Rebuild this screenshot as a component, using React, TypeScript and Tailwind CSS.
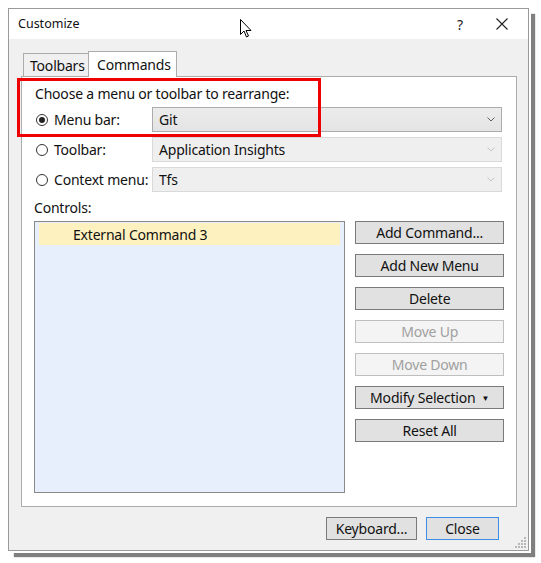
import React from 'react';

const font = { fontFamily: '"Noto Sans", "Segoe UI", sans-serif' };

const Chevron = ({ faded }: { faded?: boolean }) => (
  <svg width="8" height="5" viewBox="0 0 8 5" className="shrink-0">
    <path d="M0.5 0.5 L4 4 L7.5 0.5" fill="none" stroke={faded ? '#c4c4c4' : '#606060'} strokeWidth="1" />
  </svg>
);

const Radio = ({ checked }: { checked?: boolean }) => (
  <span className="w-[12px] h-[12px] rounded-full border border-[#333] bg-white flex items-center justify-center shrink-0">
    {checked && <span className="w-[6px] h-[6px] rounded-full bg-[#222]" />}
  </span>
);

const Select = ({ value, disabled }: { value: string; disabled?: boolean }) => (
  <div
    className={
      disabled
        ? 'w-[350px] h-[25px] border border-[#d9d9d9] bg-[#efefef] flex items-center justify-between pl-[6px] pr-[6px]'
        : 'w-[350px] h-[25px] border border-[#acacac] bg-gradient-to-b from-[#ececec] to-[#e4e4e4] flex items-center justify-between pl-[6px] pr-[6px]'
    }
  >
    <span className="text-[14px] tracking-[-0.2px] text-[#111]">{value}</span>
    <Chevron faded={disabled} />
  </div>
);

const Btn = ({ label, disabled, arrow }: { label: string; disabled?: boolean; arrow?: boolean }) => (
  <div
    className={
      disabled
        ? 'h-[23px] border border-[#bfbfbf] bg-[#f4f4f4] text-[#a0a0a0] flex items-center justify-center text-[14px] tracking-[-0.2px]'
        : 'h-[23px] border border-[#7a7a7a] bg-[#e1e1e1] text-[#111] flex items-center justify-center text-[14px] tracking-[-0.2px]'
    }
  >
    {label}
    {arrow && <span className="ml-[6px] text-[8px] leading-none">▼</span>}
  </div>
);

export default function App() {
  return (
    <div className="w-[541px] h-[563px] bg-white pt-[8px] pl-[8px] relative" style={font}>
      {/* window */}
      <div className="w-[521px] h-[543px] border border-[#9a9a9a] bg-[#f0f0f0] flex flex-col shadow-[2px_2px_0_#fff,6px_6px_1px_rgba(0,0,0,0.5)] relative">
        {/* title bar */}
        <div className="h-[30px] bg-white flex items-center pl-[9px] pr-[20px] shrink-0">
          <span className="text-[12.5px] text-[#111]">Customize</span>
          <span className="ml-auto text-[14px] text-[#222]">?</span>
          <svg width="12" height="12" viewBox="0 0 12 12" className="ml-[33px]">
            <path d="M0.5 0.5 L11.5 11.5 M11.5 0.5 L0.5 11.5" stroke="#222" strokeWidth="1.1" />
          </svg>
        </div>

        {/* tabs */}
        <div className="flex items-end ml-[14px] mt-[12px] h-[25px] relative z-10">
          <div className="h-[23px] w-[66px] border border-b-0 border-[#acacac] bg-[#f0f0f0] flex items-center pl-[6px] text-[14px] tracking-[-0.2px] text-[#111]">
            Toolbars
          </div>
          <div className="h-[26px] w-[89px] -ml-px -mb-px border border-b-0 border-[#acacac] bg-white flex items-center pl-[8px] text-[14px] tracking-[-0.2px] text-[#111]">
            Commands
          </div>
        </div>

        {/* tab panel */}
        <div className="ml-[12px] w-[496px] h-[431px] border border-[#acacac] bg-white px-[12px] pt-[6px] text-[#111] text-[14px] tracking-[-0.2px]">
          <div className="h-[20px] flex items-center pl-[1px]">Choose a menu or toolbar to rearrange:</div>

          <div className="flex flex-col gap-[5px] mt-[4px]">
            {[
              { label: 'Menu bar:', value: 'Git', checked: true, disabled: false },
              { label: 'Toolbar:', value: 'Application Insights', checked: false, disabled: true },
              { label: 'Context menu:', value: 'Tfs', checked: false, disabled: true },
            ].map((r) => (
              <div key={r.label} className="flex items-center">
                <div className="w-[118px] shrink-0 flex items-center pl-[2px] whitespace-nowrap">
                  <Radio checked={r.checked} />
                  <span className="ml-[6px]">{r.label}</span>
                </div>
                <Select value={r.value} disabled={r.disabled} />
              </div>
            ))}
          </div>

          <div className="h-[20px] mt-[5px] flex items-center">Controls:</div>

          <div className="flex gap-[10px] mt-[4px]">
            <div className="w-[312px] h-[272px] border border-[#8a8a8a] bg-[#e8effc] p-[4px] pt-[1px]">
              <div className="h-[22px] bg-[#fdf2bf] flex items-center pl-[34px]">External Command 3</div>
            </div>
            <div className="w-[149px] flex flex-col gap-[10px]">
              <Btn label="Add Command..." />
              <Btn label="Add New Menu" />
              <Btn label="Delete" />
              <Btn label="Move Up" disabled />
              <Btn label="Move Down" disabled />
              <Btn label="Modify Selection" arrow />
              <Btn label="Reset All" />
            </div>
          </div>
        </div>

        {/* footer buttons */}
        <div className="flex justify-end gap-[9px] mt-[10px] pr-[29px] text-[14px] tracking-[-0.2px] text-[#111]">
          <div className="w-[91px] h-[23px] border border-[#7a7a7a] bg-[#e1e1e1] flex items-center justify-center">Keyboard...</div>
          <div className="w-[73px] h-[23px] border border-[#3c8de6] bg-[#e1e1e1] flex items-center justify-center">Close</div>
        </div>

        {/* size grip */}
        <svg width="11" height="11" viewBox="0 0 11 11" className="absolute right-[2px] bottom-[2px]">
          {[
            [9, 1], [9, 4], [6, 4], [9, 7], [6, 7], [3, 7], [9, 10], [6, 10], [3, 10], [0, 10],
          ].map(([x, y], i) => (
            <rect key={i} x={x} y={y - 1} width="2" height="2" fill="#b8b8b8" />
          ))}
        </svg>
      </div>

      {/* red annotation box */}
      <div className="absolute left-[17px] top-[78px] w-[304px] h-[59px] border-[3px] border-[#ee0000] pointer-events-none" />

      {/* mouse cursor */}
      <svg width="13" height="20" viewBox="0 0 13 20" className="absolute left-[240px] top-[19px]">
        <path d="M0.5 0.5 L0.5 15.5 L4 12 L6.5 18 L8.5 17 L6 11.5 L11 11.5 Z" fill="#fff" stroke="#000" strokeWidth="1" strokeLinejoin="miter" />
      </svg>
    </div>
  );
}
